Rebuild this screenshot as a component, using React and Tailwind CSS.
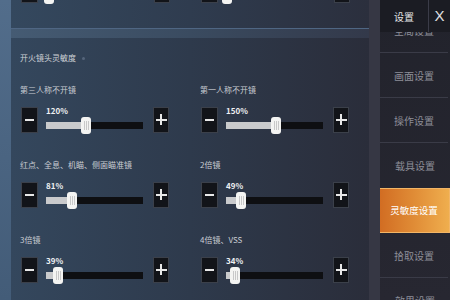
import React from "react";

const font = "font-['Noto_Sans_CJK_SC','Noto_Sans',sans-serif]";

const rows = [
  [
    { label: "第三人称不开镜", value: 120, pos: 35 },
    { label: "第一人称不开镜", value: 150, pos: 45 },
  ],
  [
    { label: "红点、全息、机瞄、侧面瞄准镜", value: 81, pos: 21 },
    { label: "2倍镜", value: 49, pos: 10 },
  ],
  [
    { label: "3倍镜", value: 39, pos: 7 },
    { label: "4倍镜、VSS", value: 34, pos: 4 },
  ],
];

const menu = ["全局设置", "画面设置", "操作设置", "载具设置", "灵敏度设置", "拾取设置", "效果设置"];

const MinusBtn = () => (
  <div className="w-[17px] h-[26px] bg-[#121419] border border-[#3b404a] flex items-center justify-center shrink-0">
    <span className="block w-[9px] h-[2px] bg-[#e8e8e8]" />
  </div>
);

const PlusBtn = () => (
  <div className="relative w-[16px] h-[26px] bg-[#121419] border border-[#3b404a] flex items-center justify-center shrink-0">
    <span className="block w-[11px] h-[2px] bg-[#e8e8e8]" />
    <span className="absolute w-[2px] h-[11px] bg-[#e8e8e8]" />
  </div>
);

const Slider = ({ value, pos, hideText }) => (
  <div className="flex items-center">
    <MinusBtn />
    <div className="ml-[8px] w-[98px] flex flex-col">
      <div className="h-[12px] text-[8px] leading-[12px] font-bold text-[#eef0f2]">
        {hideText ? "" : `${value}%`}
      </div>
      <div className="relative h-[17px] flex items-center">
        <div className="w-full h-[7px] bg-[#0e0f12] flex">
          <div className="h-full bg-[#c9cacc]" style={{ width: Math.max(pos + 5, 0) }} />
        </div>
        <div
          className="absolute top-0 w-[10px] h-[17px] rounded-[3px] bg-[#f4f4f2] flex items-center justify-center gap-[1px]"
          style={{ left: pos }}
        >
          <span className="w-px h-[9px] bg-[#c8c8c8]" />
          <span className="w-px h-[9px] bg-[#c8c8c8]" />
          <span className="w-px h-[9px] bg-[#c8c8c8]" />
        </div>
      </div>
    </div>
    <div className="ml-[10px]">
      <PlusBtn />
    </div>
  </div>
);

export default function App() {
  return (
    <div className={`w-[450px] h-[300px] flex overflow-hidden bg-[#4a6480] ${font}`}>
      <div className="w-[11px] shrink-0 bg-gradient-to-b from-[#526d8b] to-[#435c78]" />

      <div className="w-[358px] shrink-0 flex flex-col bg-[#34465b]">
        {/* previous section, cut off at the top */}
        <div className="h-[28px] shrink-0 overflow-hidden bg-gradient-to-r from-[#34485e] via-[#2f3c4f] to-[#2b2f3d] pl-[10px]">
          <div className="-mt-[25px] grid grid-cols-[149px_149px] gap-x-[31px]">
            <Slider value={0} pos={-2} hideText />
            <Slider value={0} pos={-4} hideText />
          </div>
        </div>
        <div className="h-[10px] shrink-0 bg-gradient-to-r from-[#455b73] via-[#3a4b60] to-[#33394a] border-t border-[#4f6683]" />

        <div className="flex-1 bg-gradient-to-r from-[#34475d] via-[#2e3a4c] to-[#2a2d3a] pl-[9px] pt-[13px]">
          <div className="h-[14px] text-[8px] leading-[14px] text-[#cfd3d8] flex items-center">
            开火镜头灵敏度
            <span className="ml-[6px] w-[3px] h-[3px] rounded-full bg-[#55657a]" />
          </div>
          <div className="mt-[18px] flex flex-col gap-[24px]">
            {rows.map((row, i) => (
              <div key={i} className="grid grid-cols-[149px_149px] gap-x-[31px]">
                {row.map((s) => (
                  <div key={s.label} className="flex flex-col gap-[8px]">
                    <div className="h-[14px] text-[8px] leading-[14px] text-[#c9cdd3] whitespace-nowrap">
                      {s.label}
                    </div>
                    <div className="pl-[1px]">
                      <Slider value={s.value} pos={s.pos} />
                    </div>
                  </div>
                ))}
              </div>
            ))}
          </div>
        </div>
      </div>

      <div className="w-[11px] shrink-0 bg-[#363744]" />

      <div className="flex-1 flex flex-col overflow-hidden bg-gradient-to-b from-[#22232c] to-[#272731]">
        <div className="relative z-10 h-[32px] shrink-0 flex bg-[#1b1c23]">
          <div className="w-[48px] flex items-center justify-center text-[10px] text-[#e4e4e6]">设置</div>
          <div className="w-px bg-[#3b3c48]" />
          <div className="flex-1 flex items-center justify-center text-[15px] text-[#e0e0e2] font-['Liberation_Sans',sans-serif]">
            X
          </div>
        </div>
        <div className="-mt-[24px] flex flex-col">
          {menu.map((m, i) => {
            const active = m === "灵敏度设置";
            const nextActive = menu[i + 1] === "灵敏度设置";
            return (
              <div
                key={m}
                className={
                  active
                    ? "h-[45px] shrink-0 -ml-[2px] flex items-center justify-center text-[9.5px] text-white bg-gradient-to-r from-[#d16c22] via-[#e08c36] to-[#efae4e] border border-[#f2b566]"
                    : `h-[45px] shrink-0 flex items-center justify-center text-[10px] text-[#8d8e98] ${
                        nextActive || i === menu.length - 1 ? "" : "border-b border-[#3a3b47] mr-[2px]"
                      }`
                }
              >
                {m}
              </div>
            );
          })}
        </div>
      </div>
    </div>
  );
}
